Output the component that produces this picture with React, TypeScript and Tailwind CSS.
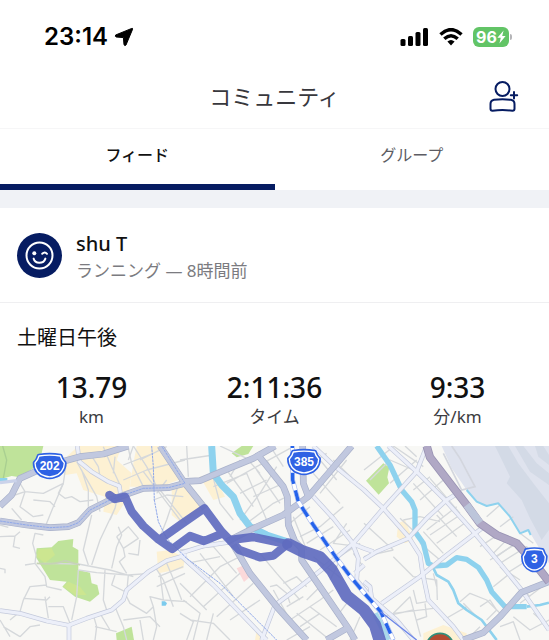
import { useState } from 'react';

interface Stat {
  value: string;
  label: string;
}

const stats: Stat[] = [
  { value: '13.79', label: 'km' },
  { value: '2:11:36', label: 'タイム' },
  { value: '9:33', label: '分/km' },
];

const tabs = ['フィード', 'グループ'];

// Map geometry, drawn on a 1647 x 582 canvas
const streets = [
  // west
  'M0 185 L45 165 L75 155 L130 160 L190 130 L200 60 M75 155 L60 200 L100 230 L130 225 M60 130 L75 155 M190 130 L175 160 L195 175 L215 170 L240 185 L280 180',
  'M190 130 L160 200 L135 262 M100 180 L150 185 L165 200 M35 205 L65 240 M0 255 L25 262 M0 290 L45 288 L60 275 M45 288 L40 320 L60 325',
  'M130 285 L105 280 L98 310 L108 345 L105 370 L75 375 M105 370 L135 410 L140 440 L185 450 M0 385 L15 388 L15 400 M140 435 L90 440 L70 480 L60 515 M70 475 L140 480 L150 470 M135 470 L145 535 M145 500 L190 500 L210 550',
  'M235 390 L290 398 L385 405 L450 400 M130 370 L235 372 L330 390 L400 410 M265 375 L250 330 L275 225 M275 375 L300 300 L345 205 L355 160 M345 205 L330 240 M335 385 L350 320 L365 285 L355 260 M315 390 L310 480 L320 510',
  'M350 290 L385 260 L415 295 L370 325 L350 290 M370 325 L375 350 L358 365 L380 400 M385 340 L415 345 L420 300 M345 405 L335 435 L375 455 M385 405 L380 460 M235 390 L230 470 L215 540',
  'M230 65 L250 100 L290 170 L300 215 M245 90 L265 150 L265 200 M310 20 L335 80 L360 135 M270 40 L295 80 L300 110 M345 50 L340 100 M385 25 L395 70 L430 140 M400 18 L440 80 L470 140',
  'M370 75 L460 40 M370 120 L440 90 L555 60 M400 18 L385 60 M420 60 L500 20 M430 95 L540 240 M480 150 L560 250 M500 120 L470 160 M540 120 L500 240 L480 290 M460 180 L500 165 L550 170',
  'M0 540 L30 590 M30 540 L60 515 M60 590 L90 560 L120 555 M10 560 L60 590 M280 525 L290 560 L285 600 M285 560 L350 575 M300 520 L330 570 M345 500 L370 560 L380 600 M370 540 L450 530 L480 560 M420 540 L430 600',
  'M375 460 L390 490 L440 520 L460 500 L470 560 L460 600 M460 500 L450 470 L490 480 L560 485 M490 480 L480 400 M465 380 L490 420 L520 500 M500 370 L530 440 L545 480 M470 440 L555 400 M475 410 L550 380',
  // centre
  'M540 60 L640 45 M560 18 L565 110 M660 18 L740 55 L780 100 M680 130 L770 80 L870 25 M720 160 L800 120 M640 140 L740 100 L800 240 M680 90 L760 200 M760 170 L850 130 M800 60 L840 130 M810 18 L850 80',
  'M640 115 L660 190 L700 240 M720 240 L780 160 L830 80 M740 250 L820 190 L860 170 M770 90 L840 190 M690 110 L720 60 M880 40 L960 60 L1010 120 M920 80 L980 40 M960 160 L1040 60 M940 100 L1020 190 M1000 60 L1092 150',
  'M870 250 L930 200 M900 290 L960 260 L1030 200 M880 230 L920 330 M920 310 L1000 260 M960 330 L1050 270 M970 380 L1080 310 M940 350 L1030 420 M1040 250 L1000 310 L1080 320 M1020 360 L990 420 M1060 340 L1090 380',
  'M540 330 L640 320 L710 400 M560 370 L660 350 M600 340 L700 470 M570 470 L660 380 L720 350 M610 500 L720 400 M650 530 L760 430 M690 540 L780 480 M540 430 L620 510 M550 480 L600 520 L580 600 M570 540 L640 550 L690 600 M640 520 L620 600 M540 520 L580 545 L560 600',
  'M810 440 L830 435 L860 460 L870 490 M820 450 L870 540 M850 430 L890 410 L920 440 M780 340 L830 400 L900 480 M870 540 L960 480 L1000 450 M860 500 L910 470 M890 520 L990 600 M930 500 L1010 560 M900 560 L960 520 M860 600 L930 560 M960 440 L920 480 M1040 490 L1010 530 M1080 530 L1050 600',
  // east
  'M1092 90 L1180 20 M1110 120 L1170 60 L1240 90 M1170 130 L1250 60 M1180 18 L1270 80 M1215 18 L1250 50 M1240 150 L1290 110 M1260 180 L1330 120 M1240 130 L1330 230 M1290 115 L1380 220 M1210 240 L1260 230 L1320 245 M1200 235 L1270 300 M1280 270 L1370 200',
  'M1290 285 L1380 225 M1310 310 L1400 245 M1270 275 L1330 340 M1310 225 L1370 290 M1260 310 L1320 360 M1092 250 L1180 330 M1092 350 L1180 330 M1230 470 L1180 520 L1300 505 M1240 450 L1250 490 L1280 485 M1230 470 L1262 590 M1250 540 L1280 530 L1275 490 M1150 530 L1240 510',
  'M1180 350 L1240 410 L1310 420 L1312 480 M1300 400 L1310 440 M1380 485 L1410 460 L1460 480 L1500 520 M1440 500 L1470 480 L1490 510 L1460 540 M1390 490 L1430 530 M1400 600 L1440 560 M1480 440 L1530 400 L1560 420 M1500 380 L1590 470 M1470 360 L1550 310 M1440 320 L1500 280',
  'M1490 350 L1560 300 M1500 370 L1580 320 L1640 400 M1560 280 L1600 310 M1460 230 L1500 195 M1500 260 L1540 230 M1530 290 L1480 340 M1520 400 L1600 350 M1560 490 L1640 430 M1600 520 L1647 560 M1540 530 L1590 570 L1647 540 M1500 560 L1540 545 L1560 600 M1330 540 L1400 500',
];

const lightRoads = [
  'M232 18 L238 65 L275 95 L325 125 L358 138 L362 165',
  'M0 512 L60 520 L140 543 L205 556 L260 535 L335 510 L370 480 L380 450 L445 395 L500 362 L560 345',
  'M207 556 L207 600',
  'M540 340 L610 318 L700 305',
  'M540 345 L640 435 L780 580 L800 600',
  'M785 600 L825 495 L900 440 L970 385 L1060 310 L1150 205 L1250 95 L1280 18',
  'M940 18 L1000 75 L1092 150 L1150 205 L1225 290 L1260 345 L1268 400 L1285 480 L1360 560 L1390 600',
  'M940 170 L1000 235 L1055 305 L1075 355 L1070 420 L1115 475 L1190 540 L1240 600',
  'M1165 18 L1250 95 L1335 180 L1420 275 L1500 370 L1565 450 L1647 570',
  'M1092 358 L1130 335 L1225 295 L1280 235 L1340 180 L1365 165',
  'M1145 490 L1260 410 L1340 345 L1445 265',
  'M1092 425 L1110 440 L1115 475',
  'M1055 310 L1092 325 L1120 335',
  'M1092 375 L1065 400',
];

const mainRoads = [
  'M0 198 L35 165 L60 115 L150 75 L240 50 L310 42 L385 18',
  'M0 243 L80 255 L150 263 L205 260 L235 248 L270 210 L330 180 L430 145 L505 143 L555 130',
  'M480 18 L540 108 L555 130 L615 205',
  'M545 125 L600 122 L680 88 L760 55 L825 18',
  'M770 40 L850 140 L862 170 L865 255 L885 305 L905 325 L905 360 L1045 565 L1065 600',
  'M700 315 L750 400 L830 500 L920 600',
  'M680 305 L760 265 L850 225 L925 170 L985 100 L1055 18',
  'M908 18 L910 130 L925 170',
  'M1040 565 L980 600',
  'M1390 600 L1450 578 L1500 530 L1565 457 L1647 425',
];

const rivers = [
  'M635 18 L640 100 L665 135 L700 170 L720 220 L750 260 L800 285 L860 305',
  'M1130 18 L1170 75 L1205 150 L1235 185 L1245 210 L1245 275 L1270 310 L1285 370 L1300 378 L1340 375 L1370 353 L1400 358 L1435 382 L1460 420 L1475 455 L1515 500 L1580 500',
];

const routes = [
  'M328 165 L345 177 L375 170 L395 215 L430 258 L475 298 L517 327 L570 288 L612 303 L668 280',
  'M480 298 L545 252 L613 205 L665 275 L718 330 L780 352 L820 347 L862 312',
  'M690 300 L760 291 L865 313',
];

const expressway = 'M1280 18 L1290 52 L1400 195 L1440 250 L1490 285 L1550 310 L1600 365 L1647 425';
const railway = 'M877 18 L878 120 L895 185 L940 255 L1010 355 L1050 408 L1095 462 L1142 515 L1180 600';

const wideShield = 'M-32 -31 Q0 -36 32 -31 Q35 -19 44 -10 C44 10 31 25 14 29 Q0 34 -14 29 C-31 25 -44 10 -44 -10 Q-35 -19 -32 -31 Z';
const narrowShield = 'M-24 -29 Q0 -34 24 -29 Q27 -19 33 -10 C33 8 24 23 10 28 Q0 32 -10 28 C-24 23 -33 8 -33 -10 Q-27 -19 -24 -29 Z';

function Shield({ x, y, text }: { x: number; y: number; text: string }) {
  const d = text.length > 1 ? wideShield : narrowShield;
  return (
    <g transform={`translate(${x} ${y})`}>
      <path d={d} fill="#2f62e4" stroke="#2f62e4" strokeWidth="14" strokeLinejoin="round" />
      <path d={d} fill="#2f62e4" stroke="#fff" strokeWidth="4" strokeLinejoin="round" />
      <text y="10" textAnchor="middle" fill="#fff" className="font-['Liberation_Sans',sans-serif] text-[36px] font-bold">
        {text}
      </text>
    </g>
  );
}

function RouteMap() {
  return (
    <svg viewBox="0 18 1647 582" className="block h-auto w-full bg-[#f8f8f5]" fill="none" role="img" aria-label="ルートマップ">
      {/* Built-up areas */}
      <g fill="#fdf1d3">
        <path d="M190 60 L235 18 L365 18 L350 60 L395 100 L385 170 L350 225 L310 215 L315 170 L250 150 L230 100 L195 105 Z" />
        <path d="M410 18 L480 18 L550 115 L480 140 L390 140 L400 70 Z" />
        <path d="M515 150 L555 130 L600 170 L610 210 L545 250 L515 225 Z" />
        <path d="M600 110 L640 100 L675 170 L640 180 Z" />
        <path d="M470 335 L510 330 L555 355 L550 385 L475 400 Z" />
        <path d="M1195 250 L1215 240 L1240 300 L1215 310 L1190 290 Z" />
        <path d="M1270 580 L1330 555 L1400 580 L1400 600 L1270 600 Z" />
        <path d="M770 570 L800 600 L765 600 Z" />
      </g>
      <path d="M710 385 L735 374 L756 405 L732 426 Z" fill="#fbd9da" />

      {/* Airport */}
      <path d="M1325 18 L1355 85 L1400 150 L1430 185 L1460 198 L1495 190 L1530 230 L1560 277 L1585 270 L1612 315 L1647 370 V18 Z" fill="#dfe3ee" />
      <g fill="#d3dae6">
        <path d="M1485 18 H1525 L1555 70 L1600 130 L1647 190 V270 L1625 300 L1590 235 L1565 180 L1520 130 L1530 110 Z" />
        <path d="M1545 18 H1570 L1610 70 L1647 100 V135 L1590 95 Z" />
        <path d="M1605 18 H1630 L1647 45 V75 L1615 50 Z" />
      </g>
      <path d="M1330 40 L1385 150 L1425 140 L1380 55 L1355 18" stroke="#d3d6de" strokeWidth="5" />

      {/* Parks */}
      <g fill="#bfe39a">
        <path d="M0 18 H130 L120 60 L100 85 L60 112 L35 108 L0 118 Z" />
        <path d="M110 325 L155 322 L175 303 L220 297 L218 320 L235 330 L235 390 L270 398 L275 430 L292 435 L298 462 L270 485 L225 470 L187 440 L200 425 L150 420 L122 375 L107 350 Z" />
        <path d="M348 580 L395 560 L402 600 L350 600 Z" />
        <path d="M695 40 L725 18 L760 18 L745 42 L710 52 Z" />
        <path d="M1098 122 L1150 70 L1168 82 L1162 112 L1167 130 L1136 164 Z" />
      </g>
      <path d="M115 328 L155 325 L165 345 L135 370 L110 350 Z M205 425 L240 440 L260 465 L225 465 L190 440 Z" fill="#cce690" />
      <path d="M8 18 L20 60 L10 115" stroke="#a9cf91" strokeWidth="4" />

      <g stroke="#d5d8db" strokeWidth="4" strokeLinejoin="round">
        {streets.map((d) => (
          <path key={d} d={d} />
        ))}
      </g>
      <path d="M110 370 Q160 375 195 362 L240 375" stroke="#c6d2b6" strokeWidth="5" />

      {/* Water */}
      <g stroke="#8ed2ee" strokeLinejoin="round">
        <path d={rivers[0]} strokeWidth="21" />
        <path d={rivers[1]} strokeWidth="16" />
        <path d="M1298 380 L1310 405 L1345 425 L1360 450 L1375 490 L1400 510 L1445 540 L1490 600" strokeWidth="8" />
        <path d="M1400 150 L1430 185 L1460 198 L1495 190 L1530 230 L1560 280 L1585 270 L1592 285" strokeWidth="6" />
        <path d="M0 120 H22" strokeWidth="12" />
        <path d="M1580 500 L1620 495 L1647 488" strokeWidth="8" />
        <path d="M1125 520 L1165 600" stroke="#a9d9ea" strokeWidth="18" />
      </g>
      <path d="M485 484 h10 l6 6 l-4 7 h-12 Z" fill="#7ccbed" />

      {/* Roads: casing first, then fill */}
      <g stroke="#c3c9db" strokeWidth="14" strokeLinejoin="round">
        {lightRoads.map((d) => (
          <path key={d} d={d} />
        ))}
      </g>
      <g stroke="#eceff9" strokeWidth="10" strokeLinejoin="round">
        {lightRoads.map((d) => (
          <path key={d} d={d} />
        ))}
      </g>
      <g stroke="#a9b1ca" strokeWidth="20" strokeLinejoin="round">
        {mainRoads.map((d) => (
          <path key={d} d={d} />
        ))}
      </g>
      <g stroke="#c1c8df" strokeWidth="16" strokeLinejoin="round">
        {mainRoads.map((d) => (
          <path key={d} d={d} />
        ))}
      </g>
      <path d="M0 128 L50 122" stroke="#cbd3ea" strokeWidth="10" />
      <path d={expressway} stroke="#9993b3" strokeWidth="25" strokeLinejoin="round" />
      <path d={expressway} stroke="#b0a8c5" strokeWidth="20" strokeLinejoin="round" />
      <path d="M1400 195 L1440 248" stroke="#bcc5da" strokeWidth="22" />

      {/* Railways */}
      <g stroke="#8fa8ea" strokeWidth="3" strokeDasharray="8 2">
        <path d="M455 18 L460 80 L463 180 L475 245 L500 295 L560 355 L660 430 L830 600" />
        <path d="M0 243 L80 255 L150 263 L205 260 L235 248 L270 210 L330 180 L430 145 L505 143 L555 130 L485 18" />
      </g>
      <path d={railway} stroke="#a6b8ee" strokeWidth="14" />
      <path d={railway} stroke="#fff" strokeWidth="10" />
      <path d={railway} stroke="#2563eb" strokeWidth="10" strokeDasharray="34 20" strokeDashoffset="28" />
      <path d="M1142 515 L1250 600" stroke="#6c86e8" strokeWidth="4" />

      {/* Route */}
      <g stroke="#5f6bbf" strokeOpacity="0.92" strokeLinejoin="round" strokeLinecap="round">
        <path d={routes.join(' ')} strokeWidth="25" />
        <path d="M865 313 L910 335 L960 352 L995 390 L1040 468 L1092 510 L1125 555 L1145 620" strokeWidth="37" />
      </g>

      <ellipse cx="1320" cy="618" rx="40" ry="38" fill="#b34a31" stroke="#2f8f7c" strokeWidth="5" />

      <Shield x={149} y={79} text="202" />
      <Shield x={912} y={67} text="385" />
      <Shield x={1603} y={360} text="3" />
    </svg>
  );
}

function StatusBar() {
  return (
    <div className="flex h-[72px] items-center justify-between pt-px pr-[37px] pl-11">
      <div className="flex items-center gap-[6px] font-['Inter',sans-serif] text-2xl font-semibold text-black">
        <span>23:14</span>
        <svg width="20" height="20" viewBox="0 0 20 20" aria-hidden="true">
          <path d="M17.8 1.4 L1.6 8 Q0.8 9.6 2.2 10 L9.4 10.6 L10 17.8 Q10.8 19.2 12 18 L18.6 2.2 Q18.8 1 17.8 1.4 Z" fill="#000" stroke="#000" strokeLinejoin="round" />
        </svg>
      </div>
      <div className="flex items-center gap-[10px]">
        <svg width="29" height="18" viewBox="0 0 29 18" aria-hidden="true">
          <rect x="0.5" y="11" width="5" height="7" rx="1.5" />
          <rect x="8" y="8" width="5" height="10" rx="1.5" />
          <rect x="15.5" y="4" width="5" height="14" rx="1.5" />
          <rect x="23" y="0" width="5" height="18" rx="1.5" />
        </svg>
        <svg width="24" height="18" viewBox="0 0 24 18" aria-hidden="true">
          <g fill="none" stroke="#000" strokeWidth="3.4">
            <path d="M1.5 6.6 Q12 -3.4 22.5 6.6" />
            <path d="M5.3 10.8 Q12 4.6 18.7 10.8" />
          </g>
          <path d="M8.4 13.6 Q12 10.4 15.6 13.6 L12 17.4 Z" />
        </svg>
        <div className="flex items-center gap-px">
          <div className="flex h-5 w-9 items-center justify-center rounded-md bg-[#62c466] font-['Inter',sans-serif] text-base font-bold text-white">
            96
            <svg width="9" height="14" viewBox="0 0 9 14" aria-hidden="true">
              <path d="M6.6 0.5 L0.4 7.8 H3.8 L2.4 13.5 L8.6 6 H5.2 Z" fill="#fff" />
            </svg>
          </div>
          <div className="h-[6px] w-[2px] rounded-r-full bg-[#b5b5b8]" />
        </div>
      </div>
    </div>
  );
}

export default function App() {
  const [active, setActive] = useState(0);

  return (
    <div className="w-full overflow-hidden bg-white font-['Noto_Sans','Noto_Sans_CJK_JP',sans-serif] text-[#111]">
      <StatusBar />

      {/* Header */}
      <header className="grid h-[57px] grid-cols-[1fr_auto_1fr] items-center border-b border-[#f6f6f7] px-[30px] pb-2">
        <h1 className="col-start-2 text-[22px] leading-8 text-[#38383d]">コミュニティ</h1>
        <button aria-label="友達を追加" className="justify-self-end">
          <svg width="30" height="32" viewBox="0 0 30 32" fill="none" stroke="#061c62" strokeWidth="2" strokeLinecap="round">
            <circle cx="13.5" cy="9" r="7" />
            <path d="M1.5 24 C1.5 21 3 20.2 5 19.8 Q13.5 18.6 22 19.8 C24 20.2 25.5 21 25.5 24 V28.8 Q25.5 30.8 23.5 30.8 Q13.5 29.4 3.5 30.8 Q1.5 30.8 1.5 28.8 Z" />
            <path d="M25 12 V18.6 M21.8 15.3 H28.2" />
          </svg>
        </button>
      </header>

      {/* Tabs */}
      <div role="tablist" className="grid grid-cols-2">
        {tabs.map((tab, i) => (
          <button
            key={tab}
            role="tab"
            aria-selected={active === i}
            onClick={() => setActive(i)}
            className={
              active === i
                ? 'h-[61px] border-b-[6px] border-[#061c62] pb-1 text-base font-medium text-[#111]'
                : 'h-[61px] border-b-[6px] border-transparent pb-1 text-base text-[#5c5c63]'
            }
          >
            {tab}
          </button>
        ))}
      </div>
      <div className="h-[18px] bg-[#f0f2f6]" />

      {/* Post author */}
      <div className="flex h-[95px] items-center gap-[14px] border-b border-[#efeff1] px-[17px]">
        <div className="flex size-[45px] shrink-0 items-center justify-center rounded-full bg-[#061c62]">
          <svg width="29" height="29" viewBox="0 0 29 29" fill="none" stroke="#fff" strokeWidth="2" strokeLinecap="round">
            <circle cx="14.5" cy="14.5" r="13" />
            <circle cx="9.3" cy="12.3" r="2" fill="#fff" stroke="none" />
            <path d="M17.2 12.8 Q19.8 10.2 22 12.8" />
            <path d="M8.6 17.6 C10 23.2 18.6 23.2 20.4 17.6" />
          </svg>
        </div>
        <div className="pt-[3px]">
          <p className="text-xl leading-7 font-medium">shu T</p>
          <p className="text-[17px] leading-[26px] text-[#7b7b80]">ランニング — 8時間前</p>
        </div>
      </div>

      {/* Activity */}
      <h2 className="px-[17px] pt-[21px] text-xl leading-7">土曜日午後</h2>
      <div className="grid grid-cols-3 pt-[18px] pb-4 text-center">
        {stats.map((stat) => (
          <div key={stat.label}>
            <p className="text-[28px] leading-[34px] font-medium">{stat.value}</p>
            <p className="text-[17px] leading-[26px] text-[#3c3c41]">{stat.label}</p>
          </div>
        ))}
      </div>
      <RouteMap />
    </div>
  );
}
